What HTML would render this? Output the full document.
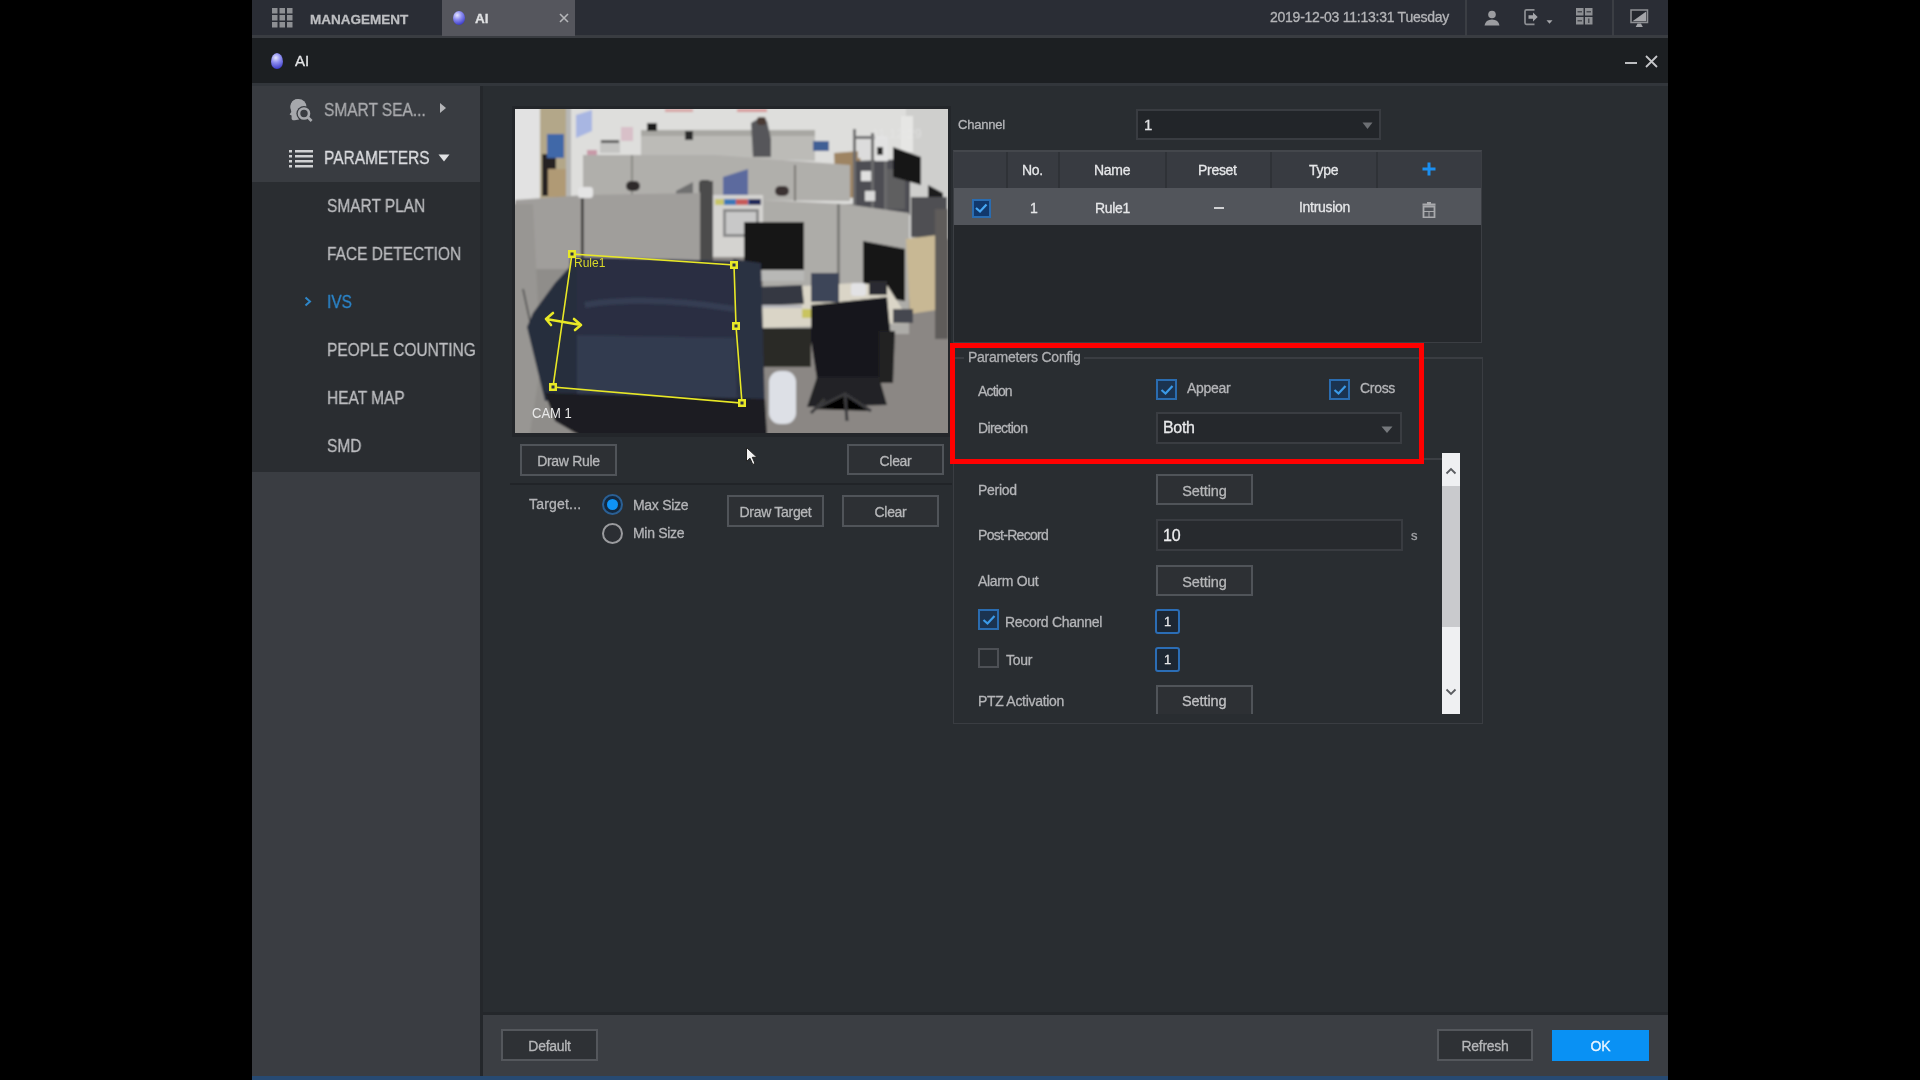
<!DOCTYPE html>
<html><head><meta charset="utf-8">
<style>
*{box-sizing:border-box;margin:0;padding:0}
html,body{width:1920px;height:1080px;overflow:hidden;background:#000;font-family:"Liberation Sans",sans-serif;color:#c8c9cb}
.a{position:absolute}
#app{position:absolute;left:252px;top:0;width:1416px;height:1080px;background:#292d31}
#app div{-webkit-text-stroke:0.3px currentColor;will-change:transform}
#topbar{left:0;top:0;width:1416px;height:38px;background:#2a2d35;border-bottom:3px solid #393c41}
#title{left:0;top:38px;width:1416px;height:45px;background:#1c1f22}
#tline{left:0;top:83px;width:1416px;height:3px;background:#32363b}
#side1{left:0;top:86px;width:229px;height:96px;background:#393c41}
#side2{left:0;top:182px;width:229px;height:290px;background:#2a2d31}
#side3{left:0;top:472px;width:229px;height:605px;background:#3a3d42}
#sideb{left:228px;top:86px;width:3px;height:991px;background:#24272b}
#footer{left:231px;top:1015px;width:1185px;height:61px;background:#3b3e43}
#bline{left:0;top:1076px;width:1416px;height:4px;background:#274a72}
.btn{position:absolute;border:1px solid #5c5f64;background:#2f3237;color:#c3c4c6;font-size:14px;text-align:center;letter-spacing:-0.3px}
.lbl{position:absolute;font-size:13px;color:#c5c6c8;white-space:nowrap;letter-spacing:-0.3px}
.side{position:absolute;font-size:18px;line-height:18px;color:#bbbcbf;white-space:nowrap;transform-origin:0 0;transform:scaleX(0.86)}

.t{position:absolute;font-size:14px;line-height:14px;color:#b4b5b8;white-space:nowrap;letter-spacing:-0.3px}
.b{position:absolute;border:2px solid #505459;background:#2d3034;color:#b6b7b9;font-size:14px;letter-spacing:-0.3px;display:flex;align-items:center;justify-content:center;white-space:nowrap;padding-top:2px}
.cb{position:absolute;width:21px;height:21px;border:2px solid #2a6cb0;background:#1b3350}
.cb svg{position:absolute;left:1px;top:2px}
svg{display:block}
</style></head>
<body>
<div id="app">
  <div id="topbar" class="a"></div>
  <div id="title" class="a"></div>
  <div id="tline" class="a"></div>
  <div id="side1" class="a"></div>
  <div id="side2" class="a"></div>
  <div id="side3" class="a"></div>
  <div id="sideb" class="a"></div>
  <div id="footer" class="a"></div>
  <div id="bline" class="a"></div>

  <!-- top bar content -->
  <div class="a" style="left:20px;top:8px;width:21px;height:20px">
    <svg width="21" height="20" viewBox="0 0 21 20"><g fill="#8d8f93">
    <rect x="0" y="0" width="5.5" height="5.5"/><rect x="7.5" y="0" width="5.5" height="5.5"/><rect x="15" y="0" width="5.5" height="5.5"/>
    <rect x="0" y="7" width="5.5" height="5.5"/><rect x="7.5" y="7" width="5.5" height="5.5"/><rect x="15" y="7" width="5.5" height="5.5"/>
    <rect x="0" y="14" width="5.5" height="5.5"/><rect x="7.5" y="14" width="5.5" height="5.5"/><rect x="15" y="14" width="5.5" height="5.5"/>
    </g></svg></div>
  <div class="a" style="left:58px;top:12px;font-size:13.5px;font-weight:bold;color:#bdbec1;letter-spacing:0px">MANAGEMENT</div>
  <div class="a" style="left:190px;top:0;width:133px;height:36px;background:#55565d"></div>
  <div class="a" style="left:201px;top:11px;width:12px;height:14px;border-radius:50%;background:radial-gradient(circle at 35% 30%,#e6e6ff 0,#8f8ff0 35%,#3a3ac8 80%)"></div>
  <div class="a" style="left:223px;top:11px;font-size:13.5px;font-weight:bold;color:#e0e1e3">AI</div>
  <div class="a" style="left:307px;top:13px;width:10px;height:10px"><svg width="10" height="10"><path d="M1 1L9 9M9 1L1 9" stroke="#b5b6b9" stroke-width="1.6"/></svg></div>
  <div class="a" style="left:1018px;top:9px;font-size:14px;color:#b4b5b8;letter-spacing:-0.25px;white-space:nowrap">2019-12-03 11:13:31 Tuesday</div>
  <div class="a" style="left:1213px;top:0;width:2px;height:36px;background:#3b3e44"></div>
  <div class="a" style="left:1360px;top:0;width:2px;height:36px;background:#3b3e44"></div>
  <!-- user icon -->
  <svg class="a" style="left:1232px;top:10px" width="16" height="16" viewBox="0 0 16 16"><circle cx="8" cy="4.5" r="3.8" fill="#9c9da1"/><path d="M0.5 15.5 Q1.5 9.5 8 9.5 Q14.5 9.5 15.5 15.5Z" fill="#9c9da1"/></svg>
  <!-- logout icon -->
  <svg class="a" style="left:1271px;top:8px" width="30" height="18" viewBox="0 0 30 18"><path d="M11.5 1.8H3.5Q2 1.8 2 3.3V14.8Q2 16.3 3.5 16.3H11.5" fill="none" stroke="#8e9094" stroke-width="1.7"/><path d="M5.5 7.3H10V4.5L14.7 9L10 13.5V10.7H5.5Z" fill="#a4a5a9"/><path d="M23.5 12.3H29.5L26.5 15.8Z" fill="#a4a5a9"/></svg>
  <!-- grid icon -->
  <svg class="a" style="left:1324px;top:8px" width="17" height="17" viewBox="0 0 17 17"><g fill="#8e9094"><rect x="0" y="0" width="7.5" height="7.5"/><rect x="9" y="0" width="7.5" height="7.5"/><rect x="0" y="9" width="7.5" height="7.5"/><rect x="9" y="9" width="7.5" height="7.5"/></g><g fill="#4a4c52"><rect x="1.5" y="3" width="4.5" height="1.5"/><rect x="10.5" y="3" width="4.5" height="1.5"/><rect x="1.5" y="12" width="4.5" height="1.5"/><rect x="12" y="10.5" width="1.5" height="4.5"/></g></svg>
  <!-- monitor icon -->
  <svg class="a" style="left:1378px;top:9px" width="19" height="19" viewBox="0 0 19 19"><rect x="1" y="1" width="16.5" height="12.5" fill="#24272e" stroke="#8e9094" stroke-width="1.5"/><path d="M2.5 12.2L16.2 2.5V12.2Z" fill="#a4a5a9"/><path d="M7.5 14.5H11L12.8 18H5.7Z" fill="#a4a5a9"/></svg>
  <!-- sidebar content -->
  <svg class="a" style="left:37px;top:97px" width="25" height="26" viewBox="0 0 25 26"><path d="M9.5 2C4.5 2 1.5 5.5 1.5 10C1.5 12 2.3 13.5 2.3 15L0.6 17.6L2.6 18.6V21.6C2.6 22.9 3.8 23.6 5.8 23.3L10 22.6V16Z" fill="#a6a8ac"/><circle cx="9.5" cy="10" r="8" fill="#a6a8ac"/><circle cx="15" cy="16.5" r="7.6" fill="#393c41"/><circle cx="15" cy="16.5" r="5" fill="none" stroke="#a6a8ac" stroke-width="2.6"/><path d="M18.6 20.1L22.6 24.1" stroke="#a6a8ac" stroke-width="2.8"/></svg>
  <div class="side" style="left:72px;top:101px;color:#a9aaad">SMART SEA...</div>
  <svg class="a" style="left:187px;top:102px" width="8" height="12" viewBox="0 0 8 12"><path d="M1 1L7 6L1 11Z" fill="#b5b6b9"/></svg>
  <svg class="a" style="left:37px;top:150px" width="25" height="18" viewBox="0 0 25 18"><g fill="#d0d1d3"><rect x="0" y="0" width="3" height="2.5"/><rect x="0" y="5" width="3" height="2.5"/><rect x="0" y="10" width="3" height="2.5"/><rect x="0" y="15" width="3" height="2.5"/><rect x="6" y="0" width="18" height="2.5"/><rect x="6" y="5" width="18" height="2.5"/><rect x="6" y="10" width="18" height="2.5"/><rect x="6" y="15" width="18" height="2.5"/></g></svg>
  <div class="side" style="left:72px;top:149px;color:#dcdde0">PARAMETERS</div>
  <svg class="a" style="left:186px;top:154px" width="12" height="8" viewBox="0 0 12 8"><path d="M0.5 0.5H11.5L6 7.5Z" fill="#e0e1e3"/></svg>
  <div class="side" style="left:75px;top:197px">SMART PLAN</div>
  <div class="side" style="left:75px;top:245px">FACE DETECTION</div>
  <svg class="a" style="left:52px;top:296px" width="8" height="11" viewBox="0 0 8 11"><path d="M1.5 1.5L6 5.5L1.5 9.5" fill="none" stroke="#2e86c8" stroke-width="2"/></svg>
  <div class="side" style="left:75px;top:293px;color:#2b86cc">IVS</div>
  <div class="side" style="left:75px;top:341px">PEOPLE COUNTING</div>
  <div class="side" style="left:75px;top:389px">HEAT MAP</div>
  <div class="side" style="left:75px;top:437px">SMD</div>

  <!-- camera -->
  <div class="a" style="left:260px;top:106px;width:439px;height:331px;background:#23262a"></div>
  <svg class="a" style="left:263px;top:109px" width="433" height="324" viewBox="0 0 433 324">
    <defs><filter id="bl" x="-5%" y="-5%" width="110%" height="110%"><feGaussianBlur stdDeviation="1.3"/></filter>
    <clipPath id="cc"><rect x="0" y="0" width="433" height="324"/></clipPath></defs>
    <g clip-path="url(#cc)"><g filter="url(#bl)">
    <rect x="-5" y="-5" width="445" height="335" fill="#8b8784"/>
    <!-- upper wall -->
    <rect x="-5" y="-5" width="445" height="100" fill="#dededc"/>
    <rect x="-5" y="-5" width="31" height="100" fill="#e2e2e2"/>
    <rect x="25" y="-5" width="27" height="95" fill="#b3a789"/>
    <rect x="27" y="45" width="14" height="42" fill="#262424"/>
    <rect x="33" y="60" width="18" height="28" fill="#b09a74"/>
    <rect x="32" y="25" width="17" height="24" fill="#4068a8"/>
    <rect x="51" y="-5" width="5" height="95" fill="#b8b8b6"/>
    <polygon points="61,6 77,1 77,22 61,29" fill="#a8b6e2"/>
    <rect x="150" y="0" width="28" height="3" fill="#d8a4a4"/>
    <rect x="222" y="0" width="30" height="3" fill="#d89a9a"/>
    <rect x="85" y="31" width="20" height="13" fill="#c4c4c2"/><rect x="86" y="31" width="18" height="3" fill="#5a5a5a"/>
    <rect x="72" y="41" width="10" height="9" fill="#c89aa8"/><rect x="106" y="18" width="12" height="14" fill="#d8c0c8"/>
    <!-- back cubicle row -->
    <polygon points="126,21 300,22 300,52 126,46" fill="#bcbbb7"/><rect x="126" y="21" width="174" height="6" fill="#a8a7a3"/>
    <rect x="132" y="14" width="10" height="8" fill="#1e1e1e"/>
    <rect x="170" y="22" width="8" height="9" fill="#2a2a2a"/>
    <polygon points="236,14 246,8 252,12 256,30 256,48 238,48" fill="#56575a"/>
    <rect x="242" y="8" width="9" height="8" rx="3" fill="#4a3a34"/>
    <rect x="298" y="32" width="16" height="10" fill="#3f5f95"/>
    <polygon points="319,44 345,42 347,88 321,90" fill="#9e8462"/>
    <!-- middle panels -->
    <polygon points="68,46 200,46 335,56 335,92 68,90" fill="#b0afab"/>
    <rect x="116" y="46" width="2" height="44" fill="#8a8985"/>
    <rect x="279" y="56" width="2" height="36" fill="#777672"/>
    
    <rect x="111" y="72" width="14" height="10" rx="5" fill="#2e2a2a"/>
    <rect x="260" y="77" width="14" height="10" rx="5" fill="#3a3230"/>
    <polygon points="161,82 178,73 178,86 161,86" fill="#707070"/>
    <polygon points="208,68 233,60 233,86 208,86" fill="#5b6a9e"/>
    <rect x="184" y="71" width="12" height="14" rx="4" fill="#2e2e2e"/>
    <!-- shelving right -->
    <rect x="391" y="-5" width="45" height="135" fill="#cfcfcd"/>
    <polygon points="341,52 395,50 395,106 341,104" fill="#4e4e52"/>
    <rect x="338" y="20" width="3" height="86" fill="#6a6a6c"/>
    <rect x="356" y="24" width="3" height="82" fill="#6a6a6c"/>
    <rect x="369" y="30" width="3" height="76" fill="#6a6a6c"/>
    <rect x="340" y="27" width="32" height="3" fill="#707072"/>
    <rect x="343" y="31" width="12" height="18" fill="#dcdcdc"/>
    <rect x="360" y="27" width="13" height="25" fill="#e2e2e2"/>
    <rect x="362" y="38" width="6" height="8" fill="#2a2a2a"/>
    <rect x="346" y="62" width="10" height="10" fill="#e0e0e0"/>
    <rect x="350" y="82" width="10" height="10" fill="#d8d8d8"/>
    <rect x="372" y="60" width="18" height="40" fill="#5e5e60"/>
    <rect x="386" y="7" width="12" height="36" fill="#e6e6e4"/>
    <polygon points="378,38 406,48 406,76 378,68" fill="#151515"/>
    <polygon points="413,76 428,84 428,106 413,100" fill="#1a1a1a"/>
    <polygon points="396,88 432,88 432,132 396,128" fill="#505052"/>
    <text x="357" y="29" font-family="Liberation Sans" font-size="13" fill="#e8e8e8" opacity="0.55">11 12:29</text>
    <!-- front left panel -->
    <polygon points="0,91 70,86 185,84 185,160 0,165" fill="#a09e9b"/>
    <rect x="-5" y="160" width="60" height="170" fill="#8f8d8a"/>
    <polygon points="-5,95 18,95 26,255 14,330 -5,330" fill="#989693"/>
    <path d="M8 180L32 290" stroke="#4a4a4a" stroke-width="1.5"/>
    <rect x="66" y="84" width="2.5" height="68" fill="#2c2c2c"/>
    <rect x="63" y="78" width="15" height="11" rx="3" fill="#e4e4e4"/>
    <rect x="185" y="72" width="13" height="85" fill="#4c4c4c"/>
    <!-- poster -->
    <rect x="198" y="86" width="50" height="62" fill="#d4d3d0"/>
    <rect x="200" y="90" width="46" height="6" fill="#3b78b8"/>
    <rect x="200" y="90" width="9" height="6" fill="#c8c66a"/>
    <rect x="221" y="90" width="12" height="6" fill="#c65a5a"/>
    <rect x="234" y="90" width="12" height="6" fill="#222a5a"/>
    <rect x="208" y="100" width="36" height="28" fill="#8a8a8a"/>
    <rect x="211" y="103" width="30" height="22" fill="#c8c8c8"/>
    <!-- front right panels -->
    <polygon points="248,91 330,95 394,104 394,225 248,225" fill="#adaca8"/>
    <rect x="322" y="95" width="3" height="130" fill="#7c7b78"/>
    <polygon points="391,130 422,126 428,200 395,205" fill="#c8b894"/>
    <rect x="420" y="100" width="13" height="130" fill="#5e5c5a"/>
    <!-- monitors -->
    <rect x="229" y="113" width="60" height="49" fill="#121213"/>
    <rect x="229" y="161" width="60" height="11" fill="#b8b8b6"/>
    <polygon points="348,132 390,140 390,192 348,186" fill="#141415"/>
    <!-- desk -->
    <polygon points="236,180 340,174 372,176 396,214 242,219" fill="#dad5c7"/>
    <polygon points="240,178 287,176 289,195 242,197" fill="#363943"/>
    <rect x="243" y="196" width="44" height="3" fill="#b8b8bc"/>
    <rect x="296" y="164" width="28" height="29" fill="#3d4558"/>
    <rect x="336" y="174" width="15" height="13" rx="3" fill="#e2e2e4"/>
    <rect x="354" y="172" width="18" height="14" fill="#2a2c30"/>
    <rect x="287" y="200" width="20" height="9" fill="#c9c460"/>
    <rect x="378" y="200" width="20" height="14" fill="#444650"/>
    <polygon points="242,219 296,219 296,258 248,258" fill="#2b2927"/>
    <!-- chair -->
    <polygon points="296,196 372,188 376,230 364,270 302,270 296,232" fill="#19191b"/>
    <polygon points="302,268 364,268 372,296 292,298" fill="#232325"/>
    <path d="M300 300L330 285L356 302M330 285L332 312M310 290L296 304" stroke="#3a3a3c" stroke-width="3"/>
    <polygon points="364,222 380,222 378,274 364,274" fill="#222224"/>
    <!-- trash -->
    <rect x="254" y="262" width="27" height="53" rx="11" fill="#dde0e6"/>
    <!-- sofa -->
    <polygon points="55,148 222,152 226,232 52,232" fill="#2a2f42"/>
    <path d="M70 196Q130 186 220 200" stroke="#363c52" stroke-width="6" fill="none"/>
    <polygon points="50,226 230,229 240,294 38,290" fill="#333a50"/>
    <polygon points="18,204 40,174 62,150 62,290 30,292 12,218" fill="#282d3d"/>
    <polygon points="218,150 246,154 250,300 222,296" fill="#2b3143"/>
    <polygon points="30,284 250,290 252,326 64,326 40,312" fill="#1b1c21"/>
    </g></g>
    <!-- rule overlay -->
    <polygon points="57,145 219,156 221,217 227,294 38,278" fill="none" stroke="#e8e826" stroke-width="1.6"/>
    <g fill="#e8e826"><rect x="53" y="141" width="8" height="8"/><rect x="215" y="152" width="8" height="8"/><rect x="217" y="213" width="8" height="8"/><rect x="223" y="290" width="8" height="8"/><rect x="34" y="274" width="8" height="8"/></g>
    <g fill="#2b3144"><rect x="55.5" y="143.5" width="3" height="3"/><rect x="217.5" y="154.5" width="3" height="3"/><rect x="219.5" y="215.5" width="3" height="3"/><rect x="225.5" y="292.5" width="3" height="3"/><rect x="36.5" y="276.5" width="3" height="3"/></g>
    <path d="M31 210L66 216M31 210L38 204M31 210L36 216M66 216L59 210M66 216L60 221" stroke="#e8e826" stroke-width="2.6" fill="none" stroke-linecap="round"/>
    <text x="59" y="158" font-family="Liberation Sans" font-size="12" fill="#d8d82a">Rule1</text>
    <text x="17" y="309" font-family="Liberation Sans" font-size="14.5" fill="#e8e8e8" transform="translate(17 309) scale(0.9 1) translate(-17 -309)">CAM 1</text>
  </svg>

  <!-- under camera -->
  <div class="b" style="left:268px;top:444px;width:97px;height:32px">Draw Rule</div>
  <div class="b" style="left:595px;top:444px;width:97px;height:31px">Clear</div>
  <div class="a" style="left:258px;top:483px;width:442px;height:2px;background:#212428"></div>
  <div class="t" style="left:277px;top:497px;letter-spacing:0.2px">Target...</div>
  <div class="a" style="left:350px;top:494px;width:21px;height:21px;border-radius:50%;border:2px solid #2a5f94;background:#14283e"></div>
  <div class="a" style="left:355px;top:499px;width:11px;height:11px;border-radius:50%;background:#0f93f6"></div>
  <div class="a" style="left:350px;top:523px;width:21px;height:21px;border-radius:50%;border:2px solid #9a9b9e;background:#2b2e33"></div>
  <div class="t" style="left:381px;top:498px">Max Size</div>
  <div class="t" style="left:381px;top:526px">Min Size</div>
  <div class="b" style="left:475px;top:495px;width:97px;height:32px">Draw Target</div>
  <div class="b" style="left:590px;top:495px;width:97px;height:32px">Clear</div>
  <svg class="a" style="left:493px;top:446px" width="14" height="20" viewBox="0 0 14 20"><path d="M1.5 1.5V15.5L5 12.2L7.8 18.5L10 17.5L7.3 11.3H12Z" fill="#f2f2f2" stroke="#222" stroke-width="1"/></svg>

  <!-- channel + table -->
  <div class="t" style="left:706px;top:118px;font-size:13px;letter-spacing:-0.2px">Channel</div>
  <div class="a" style="left:884px;top:109px;width:245px;height:31px;border:2px solid #393c41;background:#222529"></div>
  <div class="t" style="left:892px;top:117px;font-size:15px;line-height:15px;color:#e2e3e5">1</div>
  <svg class="a" style="left:1110px;top:122px" width="11" height="8" viewBox="0 0 11 8"><path d="M0.5 0.5H10.5L5.5 7Z" fill="#6c6f73"/></svg>
  <div class="a" style="left:701px;top:150px;width:529px;height:193px;border:1px solid #3b3e43;border-top:2px solid #44474c;background:#25282c"></div>
  <div class="a" style="left:702px;top:152px;width:527px;height:36px;background:#383b41"></div>
  <div class="a" style="left:702px;top:188px;width:527px;height:37px;background:#52555b"></div>
  <div class="a" style="left:754px;top:152px;width:2px;height:36px;background:#2f3237"></div>
  <div class="a" style="left:806px;top:152px;width:2px;height:36px;background:#2f3237"></div>
  <div class="a" style="left:913px;top:152px;width:2px;height:36px;background:#2f3237"></div>
  <div class="a" style="left:1018px;top:152px;width:2px;height:36px;background:#2f3237"></div>
  <div class="a" style="left:1124px;top:152px;width:2px;height:36px;background:#2f3237"></div>
  <div class="t" style="left:770px;top:163px;color:#e6e7e9">No.</div>
  <div class="t" style="left:842px;top:163px;color:#e6e7e9">Name</div>
  <div class="t" style="left:946px;top:163px;color:#e6e7e9">Preset</div>
  <div class="t" style="left:1057px;top:163px;color:#e6e7e9">Type</div>
  <svg class="a" style="left:1170px;top:162px" width="14" height="14" viewBox="0 0 14 14"><path d="M7 0.5V13.5M0.5 7H13.5" stroke="#1b8ff0" stroke-width="3"/></svg>
  <div class="cb" style="left:720px;top:199px;width:19px;height:19px;background:#11386c;border-color:#2a6cb0"><svg width="14" height="12" viewBox="0 0 14 12" style="left:0;top:1px"><path d="M2 6L6 9.5L12.5 2.5" fill="none" stroke="#48a8f4" stroke-width="2.2"/></svg></div>
  <div class="t" style="left:778px;top:201px;color:#e6e7e9">1</div>
  <div class="t" style="left:843px;top:201px;color:#e6e7e9">Rule1</div>
  <div class="a" style="left:962px;top:207px;width:10px;height:2px;background:#d0d1d3"></div>
  <div class="t" style="left:1047px;top:200px;color:#e6e7e9">Intrusion</div>
  <svg class="a" style="left:1170px;top:201px" width="14" height="17" viewBox="0 0 14 17"><path d="M5 1H9V2.5H13.5V4.5H0.5V2.5H5Z" fill="#a9aaad"/><path d="M1.5 5.5H12.5V16.5H1.5Z" fill="none" stroke="#a9aaad" stroke-width="1.8"/><path d="M1.5 10.5H12.5M7 10.5V16" stroke="#a9aaad" stroke-width="1"/></svg>

  <!-- parameters config fieldset -->
  <div class="a" style="left:701px;top:357px;width:530px;height:367px;border:1px solid #3a3d42;border-top:2px solid #3a3d42"></div>
  <div class="a" style="left:712px;top:348px;width:120px;height:18px;background:#292d31"></div>
  <div class="t" style="left:716px;top:350px;color:#aeafb2;letter-spacing:-0.25px">Parameters Config</div>
  <div class="a" style="left:1171px;top:458px;width:20px;height:2px;background:#3c3f44"></div>
  <div class="t" style="left:726px;top:384px;letter-spacing:-0.85px">Action</div>
  <div class="cb" style="left:904px;top:379px"><svg width="16" height="14" viewBox="0 0 16 14"><path d="M2.5 7L6.5 10.5L13.5 3" fill="none" stroke="#3b9ae8" stroke-width="2.2"/></svg></div>
  <div class="t" style="left:935px;top:381px">Appear</div>
  <div class="cb" style="left:1077px;top:379px"><svg width="16" height="14" viewBox="0 0 16 14"><path d="M2.5 7L6.5 10.5L13.5 3" fill="none" stroke="#3b9ae8" stroke-width="2.2"/></svg></div>
  <div class="t" style="left:1108px;top:381px">Cross</div>
  <div class="t" style="left:726px;top:421px;letter-spacing:-0.65px">Direction</div>
  <div class="a" style="left:904px;top:412px;width:246px;height:32px;border:2px solid #3a3d42;background:#25282c"></div>
  <div class="t" style="left:911px;top:420px;font-size:16px;line-height:16px;color:#e8e9eb;letter-spacing:-0.3px">Both</div>
  <svg class="a" style="left:1129px;top:426px" width="12" height="8" viewBox="0 0 12 8"><path d="M0.5 0.5H11.5L6 7Z" fill="#75787c"/></svg>
  <div class="a" style="left:698px;top:343px;width:474px;height:121px;border:5px solid #ff0000"></div>

  <!-- scrollbar -->
  <div class="a" style="left:1190px;top:453px;width:18px;height:261px;background:#eff0f2"></div>
  <div class="a" style="left:1190px;top:486px;width:18px;height:141px;background:#c9cacd"></div>
  <svg class="a" style="left:1193px;top:467px" width="12" height="8" viewBox="0 0 12 8"><path d="M1.5 6.5L6 2L10.5 6.5" fill="none" stroke="#5a5c60" stroke-width="1.8"/></svg>
  <svg class="a" style="left:1193px;top:688px" width="12" height="8" viewBox="0 0 12 8"><path d="M1.5 1.5L6 6L10.5 1.5" fill="none" stroke="#5a5c60" stroke-width="1.8"/></svg>

  <!-- rows -->
  <div class="t" style="left:726px;top:483px">Period</div>
  <div class="b" style="left:904px;top:474px;width:97px;height:31px;font-size:14.5px;letter-spacing:-0.1px">Setting</div>
  <div class="t" style="left:726px;top:528px;letter-spacing:-0.7px">Post-Record</div>
  <div class="a" style="left:904px;top:519px;width:247px;height:32px;border:2px solid #393c41;background:#272a2e"></div>
  <div class="t" style="left:911px;top:528px;font-size:16px;line-height:16px;color:#eeeeef;letter-spacing:-0.2px">10</div>
  <div class="t" style="left:1159px;top:529px;font-size:13px;color:#a4a5a8">s</div>
  <div class="t" style="left:726px;top:574px">Alarm Out</div>
  <div class="b" style="left:904px;top:565px;width:97px;height:31px;font-size:14.5px;letter-spacing:-0.1px">Setting</div>
  <div class="cb" style="left:726px;top:609px"><svg width="16" height="14" viewBox="0 0 16 14"><path d="M2.5 7L6.5 10.5L13.5 3" fill="none" stroke="#3b9ae8" stroke-width="2.2"/></svg></div>
  <div class="t" style="left:753px;top:615px">Record Channel</div>
  <div class="a" style="left:903px;top:609px;width:25px;height:25px;border:2px solid #2b6db5;border-radius:3px;background:#1d2733"></div>
  <div class="t" style="left:912px;top:615px;font-size:13px;color:#e6e7e9">1</div>
  <div class="a" style="left:726px;top:648px;width:21px;height:20px;border:2px solid #4d5055"></div>
  <div class="t" style="left:754px;top:653px">Tour</div>
  <div class="a" style="left:903px;top:647px;width:25px;height:25px;border:2px solid #2b6db5;border-radius:3px;background:#1d2733"></div>
  <div class="t" style="left:912px;top:653px;font-size:13px;color:#e6e7e9">1</div>
  <div class="t" style="left:726px;top:694px">PTZ Activation</div>
  <div class="a" style="left:904px;top:685px;width:97px;height:29px;border:2px solid #505459;border-bottom:none;background:#2d3034"></div>
  <div class="t" style="left:930px;top:694px;font-size:14.5px;line-height:14px;letter-spacing:-0.1px;color:#c0c1c3">Setting</div>

  <!-- footer buttons -->
  <div class="a" style="left:231px;top:1012px;width:1185px;height:3px;background:#24272b"></div>
  <div class="b" style="left:249px;top:1029px;width:97px;height:32px;border-color:#54575c;background:#2e3135">Default</div>
  <div class="b" style="left:1185px;top:1029px;width:96px;height:32px;border-color:#54575c;background:#2e3135">Refresh</div>
  <div class="a" style="left:1300px;top:1030px;width:97px;height:31px;background:#0991f4;color:#eaf5ff;font-size:14px;display:flex;align-items:center;justify-content:center">OK</div>
  <!-- title bar content -->
  <div class="a" style="left:19px;top:53px;width:12px;height:16px;border-radius:50% 50% 50% 50%/55% 55% 45% 45%;background:radial-gradient(circle at 40% 30%,#e6e6ff 0,#9090f0 35%,#3a3ac8 85%)"></div>
  <div class="a" style="left:43px;top:52px;font-size:15px;color:#e4e5e7">AI</div>
  <div class="a" style="left:1373px;top:62px;width:12px;height:2px;background:#bdbec1"></div>
  <svg class="a" style="left:1393px;top:55px" width="13" height="13" viewBox="0 0 13 13"><path d="M1 1L12 12M12 1L1 12" stroke="#c5c6c9" stroke-width="1.8"/></svg>
</div>
</body></html>
